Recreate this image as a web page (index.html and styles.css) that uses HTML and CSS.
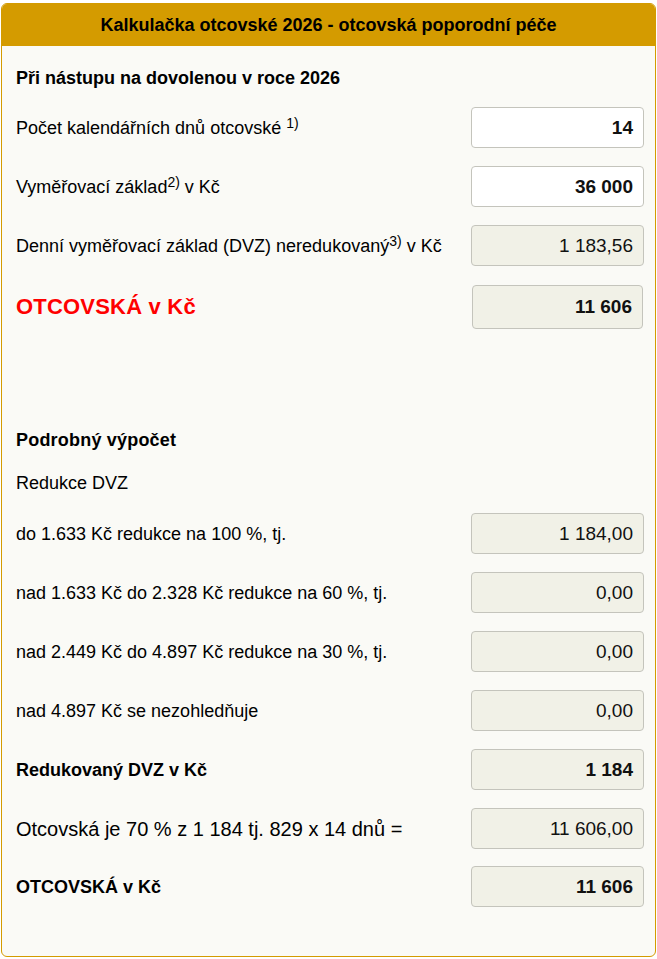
FILE: index.html
```html
<!DOCTYPE html>
<html lang="cs">
<head>
<meta charset="utf-8">
<title>Kalkulačka otcovské 2026</title>
<link rel="stylesheet" href="styles.css">
</head>
<body>
<div class="calc">
  <div class="calc-head">Kalkulačka otcovské 2026 - otcovská poporodní péče</div>
  <div class="calc-body">
    <div class="section-title first">Při nástupu na dovolenou v roce 2026</div>

    <div class="row">
      <div class="label">Počet kalendářních dnů otcovské <sup>1)</sup></div>
      <div class="field edit bold">14</div>
    </div>
    <div class="row">
      <div class="label">Vyměřovací základ<sup>2)</sup> v Kč</div>
      <div class="field edit bold">36 000</div>
    </div>
    <div class="row">
      <div class="label">Denní vyměřovací základ (DVZ) neredukovaný<sup>3)</sup> v Kč</div>
      <div class="field">1 183,56</div>
    </div>
    <div class="row row-total">
      <div class="label total-red">OTCOVSKÁ v Kč</div>
      <div class="field big bold">11 606</div>
    </div>

    <div class="section-title detail">Podrobný výpočet</div>
    <div class="sub-title">Redukce DVZ</div>

    <div class="row">
      <div class="label">do 1.633 Kč redukce na 100 %, tj.</div>
      <div class="field">1 184,00</div>
    </div>
    <div class="row">
      <div class="label">nad 1.633 Kč do 2.328 Kč redukce na 60 %, tj.</div>
      <div class="field">0,00</div>
    </div>
    <div class="row">
      <div class="label">nad 2.449 Kč do 4.897 Kč redukce na 30 %, tj.</div>
      <div class="field">0,00</div>
    </div>
    <div class="row">
      <div class="label">nad 4.897 Kč se nezohledňuje</div>
      <div class="field">0,00</div>
    </div>
    <div class="row">
      <div class="label label-bold">Redukovaný DVZ v Kč</div>
      <div class="field bold">1 184</div>
    </div>
    <div class="row">
      <div class="label label-large">Otcovská je 70 % z 1 184 tj. 829 x 14 dnů =</div>
      <div class="field">11 606,00</div>
    </div>
    <div class="row last">
      <div class="label label-bold">OTCOVSKÁ v Kč</div>
      <div class="field bold">11 606</div>
    </div>
  </div>
</div>
</body>
</html>
```
FILE: styles.css
```css
html, body {
  margin: 0;
  padding: 0;
  background: #ffffff;
}

body {
  padding: 3px 1px 0 1px;
  font-family: "Liberation Sans", Arial, sans-serif;
  color: #000;
}

.calc {
  width: 655px;
  height: 954px;
  box-sizing: border-box;
  border: 1px solid #d49b00;
  border-radius: 6px;
  overflow: hidden;
  background: #fafaf6;
}

.calc-head {
  height: 42px;
  background: #d49b00;
  display: flex;
  align-items: center;
  justify-content: center;
  font-weight: bold;
  font-size: 18px;
  color: #000;
}

.calc-body {
  padding: 21px 11px 0 14px;
}

.section-title {
  font-weight: bold;
  font-size: 18px;
  line-height: 22px;
  height: 22px;
}

.section-title.first {
  margin-bottom: 18px;
}

.section-title.detail {
  margin-top: 100px;
  letter-spacing: 0.2px;
}

.sub-title {
  font-size: 18px;
  line-height: 22px;
  margin-top: 21px;
  margin-bottom: 19px;
}

.row {
  display: flex;
  align-items: center;
  justify-content: space-between;
  margin-bottom: 18px;
}

.row-total {
  margin-top: 19px;
  padding-right: 1px;
}

.row.last {
  margin-top: -1px;
}

.label {
  font-size: 18px;
  line-height: 22px;
}

.label sup {
  font-size: 14px;
  line-height: 0;
  vertical-align: 6px;
}

.total-red {
  color: #ff0000;
  font-weight: bold;
  font-size: 22px;
  letter-spacing: 0.2px;
}

.label-bold {
  font-weight: bold;
  font-size: 18px;
}

.label-large {
  font-size: 20px;
}

.field {
  width: 173px;
  height: 41px;
  box-sizing: border-box;
  border: 1px solid #c4c4bc;
  border-radius: 4px;
  background: #f1f1e7;
  display: flex;
  align-items: center;
  justify-content: flex-end;
  padding-right: 10px;
  font-size: 19px;
  color: #111;
}

.field.edit {
  background: #ffffff;
}

.field.bold {
  font-weight: bold;
}

.field.big {
  width: 171px;
  height: 44px;
}
```
